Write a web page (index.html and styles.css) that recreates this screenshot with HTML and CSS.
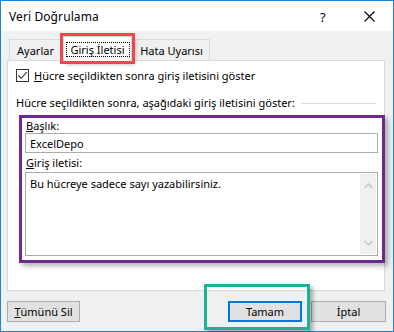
FILE: index.html
```html
<!DOCTYPE html>
<html lang="tr">
<head>
<meta charset="utf-8">
<title>Veri Doğrulama</title>
<link rel="stylesheet" href="styles.css">
</head>
<body>
<div class="window">
  <div class="titlebar">
    <span class="title">Veri Doğrulama</span>
    <span class="help">?</span>
    <svg class="close" width="11" height="11" viewBox="0 0 11 11"><path d="M0.5 0.5L10.5 10.5M10.5 0.5L0.5 10.5" stroke="#000" stroke-width="1.1" fill="none"/></svg>
  </div>
  <div class="tabs">
    <div class="tab tab-a">Ayarlar</div>
    <div class="tab tab-sel"><span class="focus">Giriş İletisi</span></div>
    <div class="tab tab-h">Hata Uyarısı</div>
  </div>
  <div class="panel">
    <div class="check-row">
      <span class="checkbox"><svg width="11" height="11" viewBox="0 0 11 11"><path d="M1.5 5.5L4.2 8.3L9.8 2.2" stroke="#333" stroke-width="1.1" fill="none"/></svg></span>
      <span class="check-label"><u>H</u>ücre seçildikten sonra giriş iletisini göster</span>
    </div>
    <div class="group-head">
      <span>Hücre seçildikten sonra, aşağıdaki giriş iletisini göster:</span>
      <span class="rule"></span>
    </div>
    <div class="fields">
      <div class="field-label"><u>B</u>aşlık:</div>
      <div class="input">ExcelDepo</div>
      <div class="field-label second"><u>G</u>iriş iletisi:</div>
      <div class="textarea">
        <div class="ta-text">Bu hücreye sadece sayı yazabilirsiniz.</div>
        <div class="scrollbar">
          <svg width="9" height="6" viewBox="0 0 9 6"><path d="M0.5 5L4.5 1L8.5 5" stroke="#c3c3c3" stroke-width="1.3" fill="none"/></svg>
          <svg width="9" height="6" viewBox="0 0 9 6"><path d="M0.5 1L4.5 5L8.5 1" stroke="#c3c3c3" stroke-width="1.3" fill="none"/></svg>
        </div>
      </div>
    </div>
  </div>
  <div class="buttons">
    <div class="btn btn-clear"><u>T</u>ümünü Sil</div>
    <div class="spacer"></div>
    <div class="btn btn-ok">Tamam</div>
    <div class="btn btn-cancel">İptal</div>
  </div>
  <div class="mark-green"></div>
</div>
</body>
</html>
```
FILE: styles.css
```css
html, body {
  margin: 0;
  padding: 0;
  background: #fff;
}
body {
  font-family: "Noto Sans", "Open Sans", sans-serif;
  font-size: 11px;
  color: #000;
}
u {
  text-decoration: underline;
  text-underline-offset: 1px;
}
.window {
  width: 394px;
  height: 332px;
  box-sizing: border-box;
  border: 1px solid #1883d7;
  background: #f0f0f0;
  position: relative;
  display: flex;
  flex-direction: column;
}
.titlebar {
  height: 30px;
  flex: none;
  background: #fff;
  display: flex;
  align-items: center;
  padding-left: 8px;
}
.title {
  flex: 1;
  font-size: 12px;
  letter-spacing: 0.1px;
}
.help {
  font-size: 13px;
  width: 10px;
  margin-right: 34px;
  margin-top: 1px;
}
.close {
  margin-right: 18px;
}
.tabs {
  height: 29px;
  flex: none;
  display: flex;
  align-items: flex-end;
  padding-left: 8px;
  position: relative;
  z-index: 2;
}
.tab {
  height: 21px;
  box-sizing: border-box;
  border: 1px solid #d9d9d9;
  border-bottom: none;
  background: #f0f0f0;
  display: flex;
  align-items: center;
  justify-content: center;
  padding-top: 1px;
}
.tab-a {
  width: 53px;
}
.tab-sel {
  width: 69px;
  height: 25px;
  margin: 0 1px -1px 1px;
  background: #fff;
  outline: 3px solid #ea4a4d;
  box-shadow: 3px 3px 4px rgba(0, 0, 0, 0.35);
  padding-top: 0;
  position: relative;
}
.focus {
  border: 1px dotted #000;
  height: 15px;
  box-sizing: border-box;
  width: 64px;
  display: flex;
  align-items: center;
  justify-content: center;
}
.tab-h {
  width: 77px;
}
.panel {
  margin: 0 8px 0 6px;
  height: 231px;
  flex: none;
  box-sizing: border-box;
  border: 1px solid #d9d9d9;
  background: #fff;
  padding: 7px 8px 0 8px;
}
.check-row {
  display: flex;
  align-items: center;
  height: 14px;
}
.checkbox {
  width: 13px;
  height: 13px;
  box-sizing: border-box;
  border: 1px solid #333;
  background: #fff;
  display: flex;
  align-items: center;
  justify-content: center;
}
.check-label {
  margin-left: 5px;
}
.group-head {
  display: flex;
  align-items: center;
  margin-top: 13px;
  height: 14px;
}
.rule {
  flex: 1;
  height: 1px;
  background: #dcdcdc;
  margin-left: 6px;
  margin-top: 2px;
}
.fields {
  margin: 6px -9px 0 3px;
  height: 148px;
  box-sizing: border-box;
  border: 3px solid #6a2a90;
  padding: 0 4px 0 3px;
  box-shadow: 3px 3px 5px rgba(0, 0, 0, 0.3);
}
.field-label {
  height: 15px;
  display: flex;
  align-items: center;
  padding-left: 1px;
}
.field-label.second {
  height: 19px;
}
.input {
  height: 20px;
  box-sizing: border-box;
  border: 1px solid #ababab;
  padding-left: 4px;
  display: flex;
  align-items: center;
}
.textarea {
  height: 84px;
  box-sizing: border-box;
  border: 1px solid #ababab;
  display: flex;
}
.ta-text {
  flex: 1;
  padding: 3px 0 0 4px;
}
.scrollbar {
  width: 16px;
  margin: 1px;
  background: #f0f0f0;
  display: flex;
  flex-direction: column;
  align-items: center;
  justify-content: space-between;
  padding: 9px 0 8px 0;
}
.buttons {
  display: flex;
  margin-top: 10px;
  padding: 0 7px 0 6px;
}
.btn {
  height: 21px;
  box-sizing: border-box;
  border: 1px solid #adadad;
  background: #e1e1e1;
  display: flex;
  align-items: center;
  justify-content: center;
}
.btn-clear {
  width: 73px;
}
.spacer {
  flex: 1;
}
.btn-ok {
  width: 74px;
  border: 2px solid #0078d7;
}
.btn-cancel {
  width: 75px;
  margin-left: 9px;
}
.mark-green {
  position: absolute;
  left: 203px;
  top: 283px;
  width: 106px;
  height: 46px;
  box-sizing: border-box;
  border: 3px solid #1bb394;
  box-shadow: 3px 3px 4px rgba(0, 0, 0, 0.3);
}
```
